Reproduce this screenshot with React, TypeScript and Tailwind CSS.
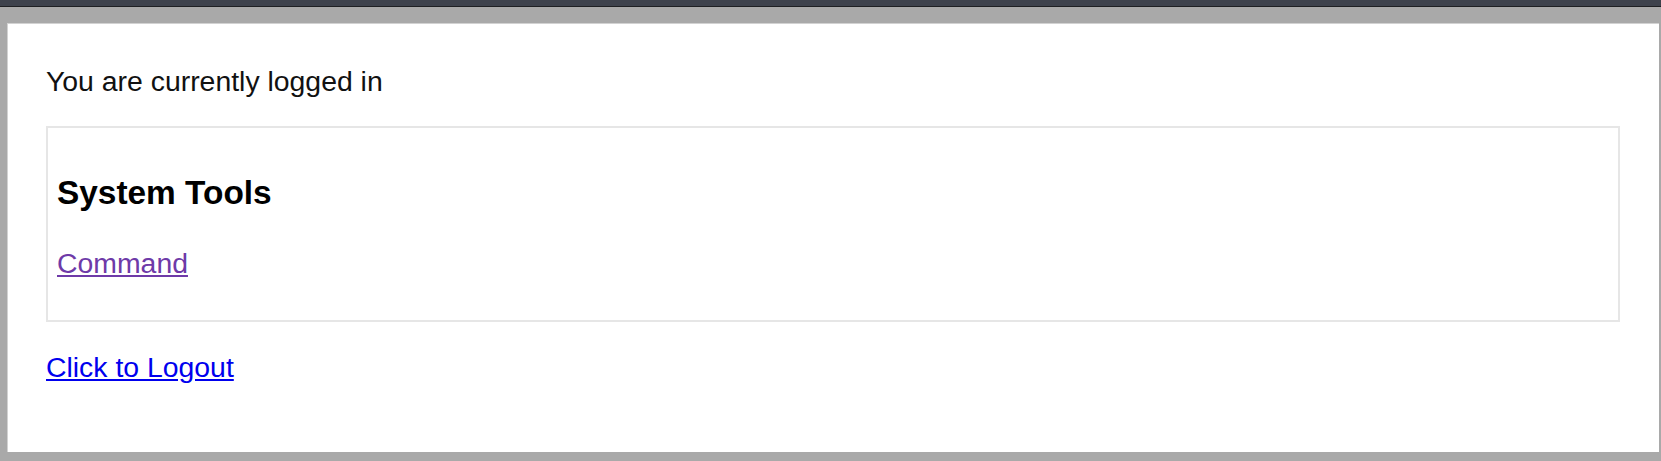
const App = () => {
  return (
    <div className="w-[1661px] h-[461px] flex flex-col bg-[#a9a9a9] overflow-hidden font-['Liberation_Sans',Arial,sans-serif]">
      {/* window chrome strip */}
      <div className="h-[7px] bg-[#3e424c] border-b border-[#1e1f22] shrink-0" />

      <div className="flex-1 pt-[16px] pl-[7px] pr-[2px] pb-[9px] flex">
        <div className="flex-1 bg-white border-t border-l border-[#d2d2d2] pt-[41px] pl-[38px] pr-[39px]">
          <p className="text-[28.4px] leading-[32px] text-[#111]">You are currently logged in</p>

          <div className="mt-[29px] border-2 border-[#e6e6e6] px-[9px] pt-[46px] pb-[41px]">
            <h3 className="text-[33.4px] leading-[38px] font-bold text-black">System Tools</h3>
            <p className="mt-[35px] text-[28.4px] leading-[32px]">
              <a href="#" className="text-[#6e3aa8] underline">
                Command
              </a>
            </p>
          </div>

          <p className="mt-[29px] text-[28.4px] leading-[32px]">
            <a href="#" className="text-[#0000ee] underline">
              Click to Logout
            </a>
          </p>
        </div>
      </div>
    </div>
  );
};

export default App;
